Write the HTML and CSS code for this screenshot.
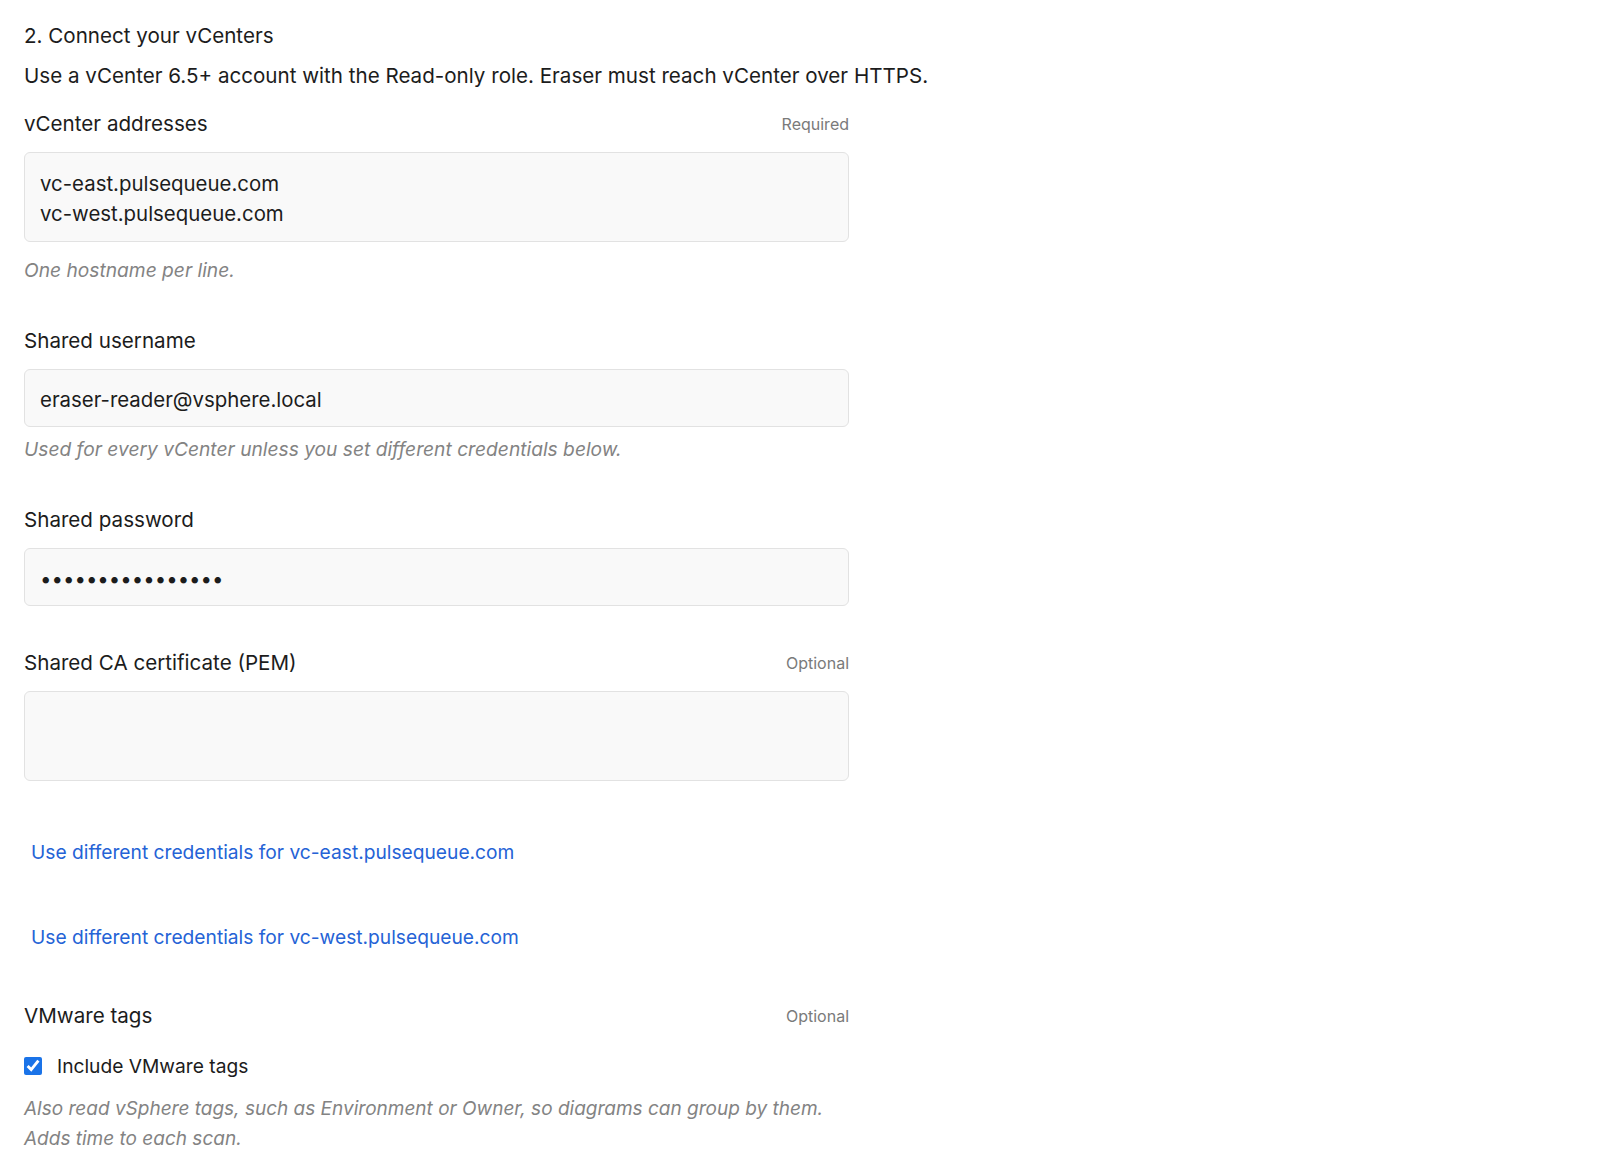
FILE: index.html
```html
<!DOCTYPE html>
<html lang="en">
<head>
<meta charset="utf-8">
<title>Connect your vCenters</title>
<link rel="stylesheet" href="styles.css">
</head>
<body>
<main class="page">
  <h2 class="step-title">2. Connect your vCenters</h2>
  <p class="step-desc">Use a vCenter 6.5+ account with the Read-only role. Eraser must reach vCenter over HTTPS.</p>

  <div class="form">
    <div class="field">
      <div class="label-row">
        <label class="label" for="addr">vCenter addresses</label>
        <span class="tag">Required</span>
      </div>
      <textarea id="addr" class="control area" rows="2">vc-east.pulsequeue.com
vc-west.pulsequeue.com</textarea>
      <p class="hint hint-after-area">One hostname per line.</p>
    </div>

    <div class="field">
      <div class="label-row">
        <label class="label" for="user">Shared username</label>
      </div>
      <input id="user" class="control" type="text" value="eraser-reader@vsphere.local">
      <p class="hint">Used for every vCenter unless you set different credentials below.</p>
    </div>

    <div class="field">
      <div class="label-row">
        <label class="label" for="pass">Shared password</label>
      </div>
      <input id="pass" class="control" type="password" value="supersecretpass1">
    </div>

    <div class="field">
      <div class="label-row">
        <label class="label" for="ca">Shared CA certificate (PEM)</label>
        <span class="tag">Optional</span>
      </div>
      <textarea id="ca" class="control area" rows="2"></textarea>
    </div>

    <div class="field field-link first-link">
      <button class="link-btn" type="button">Use different credentials for vc-east.pulsequeue.com</button>
    </div>

    <div class="field field-link">
      <button class="link-btn" type="button">Use different credentials for vc-west.pulsequeue.com</button>
    </div>

    <div class="field field-tags">
      <div class="label-row">
        <span class="label">VMware tags</span>
        <span class="tag">Optional</span>
      </div>
      <label class="check-row">
        <input type="checkbox" class="check" checked>
        <span>Include VMware tags</span>
      </label>
      <p class="hint hint-multi">Also read vSphere tags, such as Environment or Owner, so diagrams can group by them. Adds time to each scan.</p>
    </div>
  </div>
</main>
</body>
</html>
```

FILE: styles.css
```css
* {
  box-sizing: border-box;
}

html, body {
  margin: 0;
  padding: 0;
  background: #ffffff;
}

body {
  font-family: Inter, "Noto Sans", "Liberation Sans", sans-serif;
  font-size: 20px;
  line-height: 30px;
  color: #1c1c1c;
}

.page {
  padding: 21px 24px 0 24px;
}

.step-title {
  margin: 0;
  font-size: 20.6px;
  font-weight: 400;
  line-height: 30px;
}

.step-desc {
  margin: 10px 0 0 0;
  font-size: 20.6px;
  line-height: 30px;
}

.form {
  width: 825px;
  margin-top: 18px;
  display: flex;
  flex-direction: column;
  gap: 42px;
}

.field {
  display: flex;
  flex-direction: column;
}

.label-row {
  display: flex;
  justify-content: space-between;
  align-items: center;
  height: 30px;
  margin-bottom: 13px;
}

.label {
  font-size: 20.6px;
  line-height: 30px;
  color: #1c1c1c;
}

.tag {
  font-size: 16px;
  line-height: 24px;
  color: #7a7a7a;
}

.control {
  display: block;
  width: 100%;
  font-family: inherit;
  font-size: 20.4px;
  line-height: 30px;
  color: #1c1c1c;
  background: #f9f9f9;
  border: 1px solid #e2e2e2;
  border-radius: 6px;
  padding: 15px 15px 11px 15px;
  margin: 0;
  outline: none;
}

.area {
  resize: none;
  height: 90px;
  padding: 16px 15px 12px 15px;
  overflow: hidden;
}

.hint {
  margin: 9px 0 0 0;
  font-size: 19.2px;
  line-height: 27px;
  font-style: italic;
  color: #838383;
}

.hint-after-area {
  margin-top: 15px;
}

.hint-multi {
  margin-top: 13px;
  line-height: 30px;
  font-size: 19px;
}

.field-link {
  align-items: flex-start;
}

.first-link {
  margin-top: 7px;
}

.field-tags {
  margin-top: 1px;
}

.link-btn {
  font-family: inherit;
  font-size: 19.2px;
  line-height: 30px;
  color: #2563d6;
  background: transparent;
  border: 0;
  padding: 6.5px 7px;
  margin: 0;
  cursor: pointer;
}

.check-row {
  display: flex;
  align-items: center;
  gap: 15px;
  margin-top: 7px;
  height: 30px;
  font-size: 19.2px;
}

.check {
  width: 18px;
  height: 18px;
  margin: 0;
  accent-color: #1a73e8;
}
```
